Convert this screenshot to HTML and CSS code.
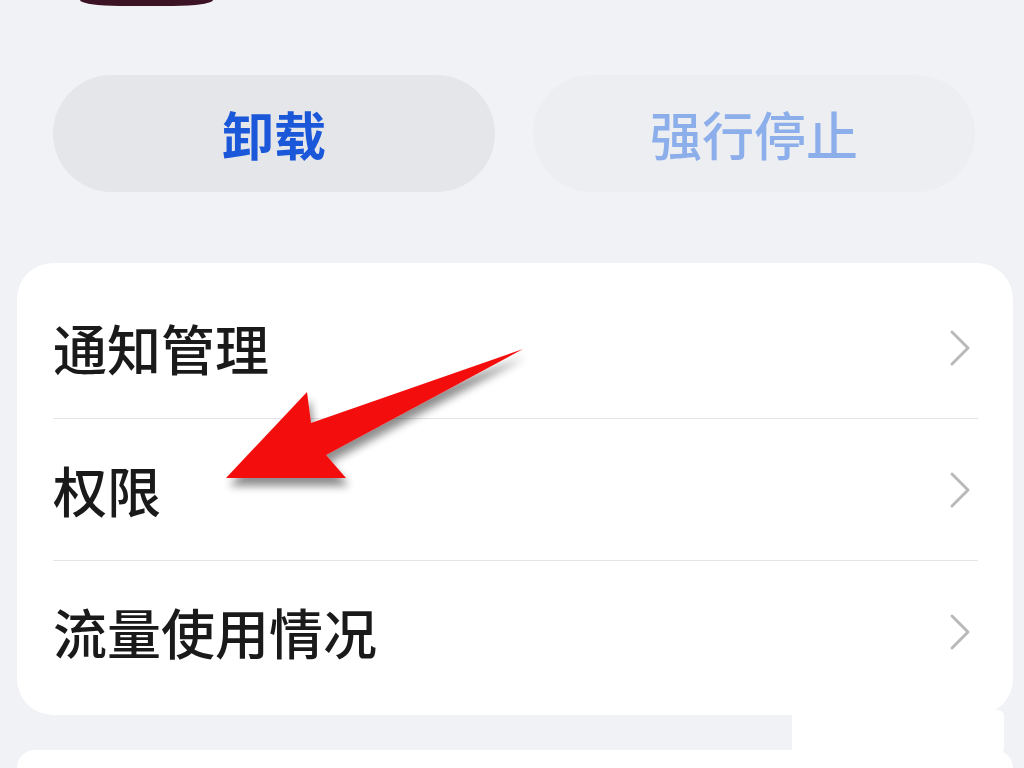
FILE: index.html
```html
<!DOCTYPE html>
<html lang="zh-CN">
<head>
<meta charset="utf-8">
<title>应用信息</title>
<link rel="stylesheet" href="styles.css">
</head>
<body>
<div class="page">
  <div class="icon-row"><div class="app-icon"></div></div>
  <div class="actions">
    <button class="pill pill-primary">卸载</button>
    <button class="pill pill-disabled">强行停止</button>
  </div>
  <div class="card">
    <div class="row"><span class="label">通知管理</span><svg class="chev" viewBox="0 0 24 40" width="24" height="40"><path d="M4 4 L20 20 L4 36" fill="none" stroke="#b9b9bb" stroke-width="3" stroke-linecap="round" stroke-linejoin="round"/></svg></div>
    <div class="row"><span class="label">权限</span><svg class="chev" viewBox="0 0 24 40" width="24" height="40"><path d="M4 4 L20 20 L4 36" fill="none" stroke="#b9b9bb" stroke-width="3" stroke-linecap="round" stroke-linejoin="round"/></svg></div>
    <div class="row"><span class="label">流量使用情况</span><svg class="chev" viewBox="0 0 24 40" width="24" height="40"><path d="M4 4 L20 20 L4 36" fill="none" stroke="#b9b9bb" stroke-width="3" stroke-linecap="round" stroke-linejoin="round"/></svg></div>
  </div>
  <div class="card card-next"></div>
  <div class="blob"></div>
  <svg class="arrow" viewBox="0 0 1024 768" width="1024" height="768">
    <defs>
      <filter id="sh" x="-20%" y="-20%" width="140%" height="140%">
        <feGaussianBlur in="SourceAlpha" stdDeviation="4"/>
        <feOffset dx="3" dy="8" result="b"/>
        <feComponentTransfer><feFuncA type="linear" slope="0.45"/></feComponentTransfer>
        <feMerge><feMergeNode/><feMergeNode in="SourceGraphic"/></feMerge>
      </filter>
    </defs>
    <polygon points="226,478 307,392 311,423 523,349 326,455 346,478" fill="#f40f0f" filter="url(#sh)"/>
  </svg>
</div>
</body>
</html>
```
FILE: styles.css
```css
* { box-sizing: border-box; }
html, body { margin: 0; padding: 0; }
body {
  background: #f1f2f6;
  font-family: "Noto Sans CJK SC", "Noto Sans", sans-serif;
  width: 1024px;
  height: 768px;
  overflow: hidden;
}
.page { position: relative; width: 1024px; height: 768px; overflow: hidden; }
.icon-row { height: 5px; display: flex; padding-left: 80px; }
.app-icon {
  width: 133px;
  height: 6px;
  background: #3b1322;
  border-radius: 0 0 40px 40px / 0 0 6px 6px;
}
.actions {
  margin-top: 70px;
  display: flex;
  gap: 38px;
  padding-left: 53px;
}
.pill {
  width: 442px;
  height: 117px;
  border: none;
  border-radius: 59px;
  font-family: inherit;
  font-size: 52px;
  display: flex;
  align-items: center;
  justify-content: center;
  padding: 0;
}
.pill-primary { background: #e5e6ea; color: #1b58d9; font-weight: 700; }
.pill-disabled { background: #eceef1; color: #8caeea; font-weight: 500; }
.card {
  margin: 71px 11px 0 17px;
  background: #ffffff;
  border-radius: 36px;
  padding: 14px 35px 12px 36px;
}
.row {
  height: 142px;
  display: flex;
  align-items: center;
  justify-content: space-between;
  border-bottom: 1px solid #e4e4e6;
}
.row:last-child { border-bottom: none; }
.label {
  font-size: 54px;
  color: #1a1a1a;
  font-weight: 500;
  line-height: 1;
}
.chev { margin-right: 6px; }
.card-next {
  margin-top: 35px;
  height: 18px;
  padding: 0;
  border-radius: 36px 36px 0 0;
}
.blob {
  position: absolute;
  left: 792px;
  top: 710px;
  width: 212px;
  height: 44px;
  background: #ffffff;
  border-radius: 6px;
}
.arrow { position: absolute; left: 0; top: 0; pointer-events: none; }
```
